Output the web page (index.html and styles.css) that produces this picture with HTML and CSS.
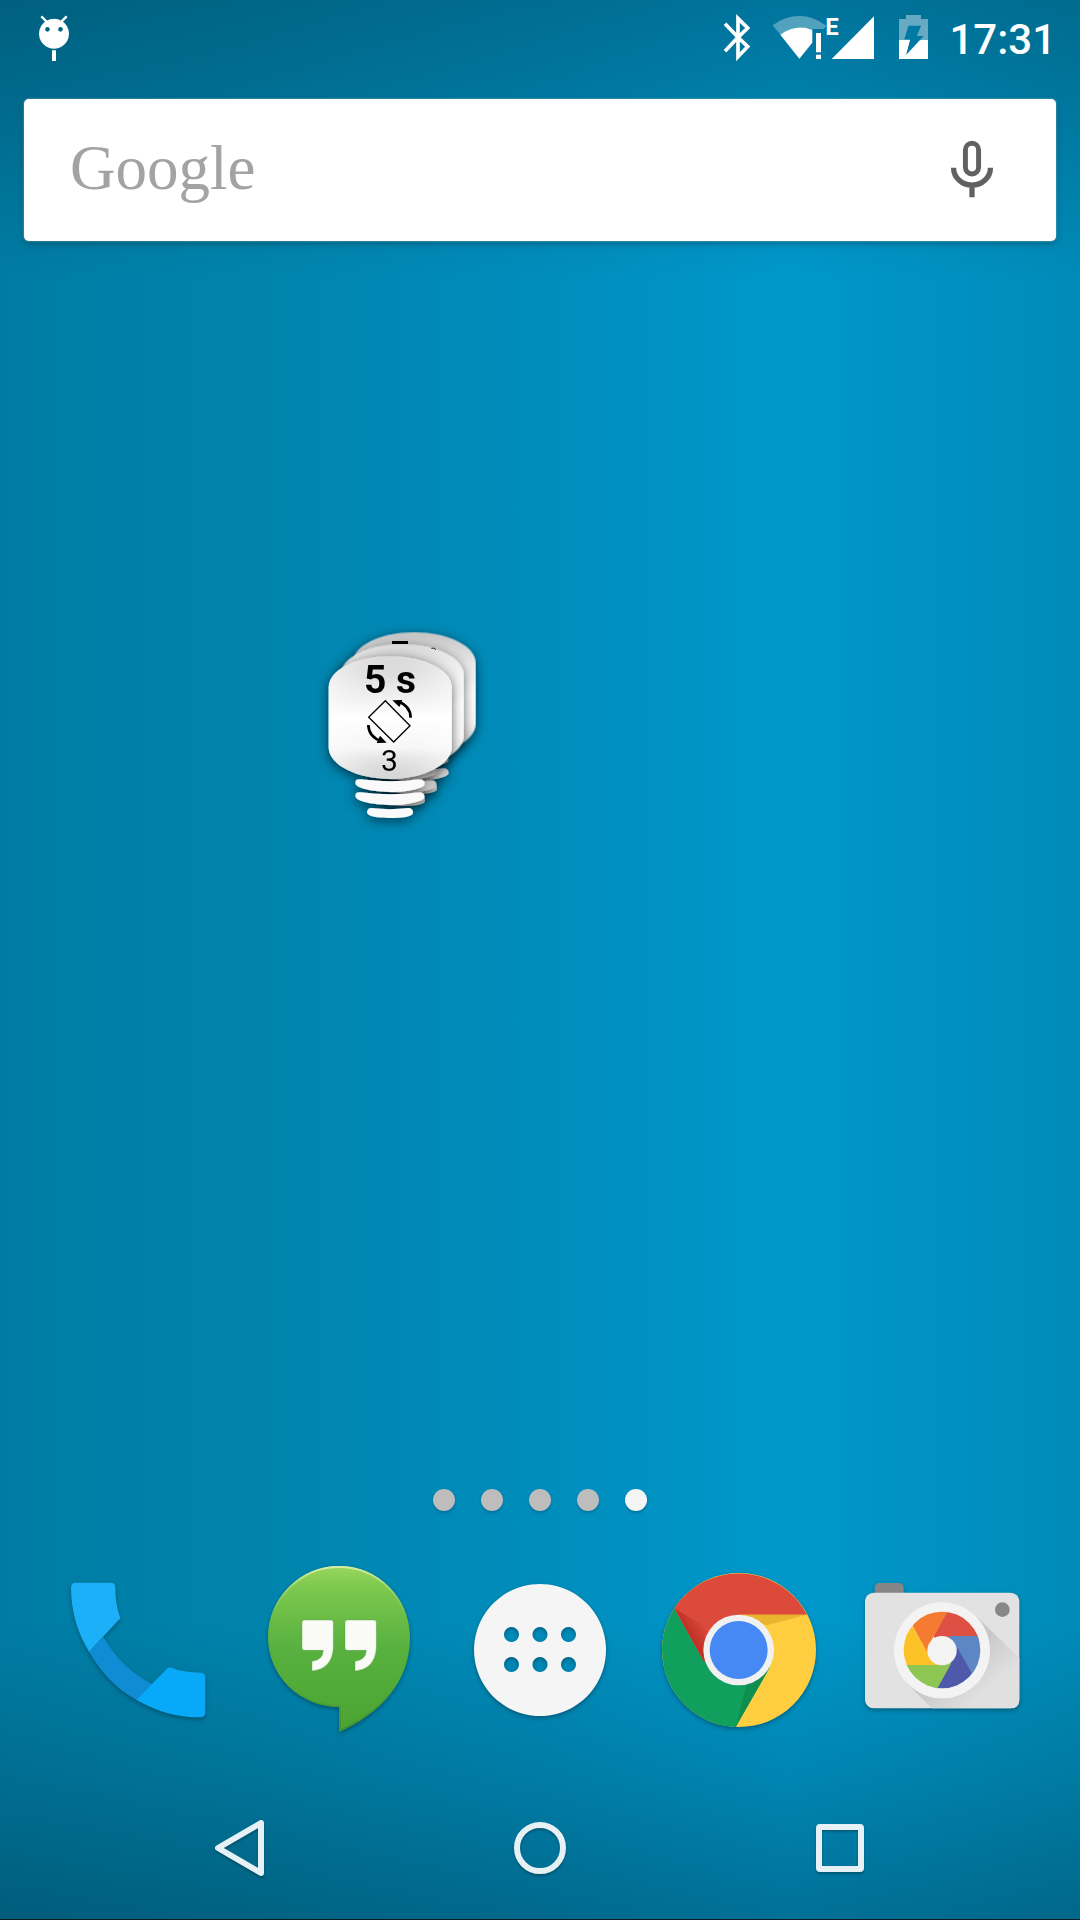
FILE: index.html
```html
<!DOCTYPE html>
<html lang="en">
<head>
<meta charset="utf-8">
<meta name="viewport" content="width=device-width, initial-scale=1">
<title>Home screen</title>
<link rel="stylesheet" href="styles.css">
</head>
<body class="screen">
<header class="status">
  <svg class="status-icon droid" viewBox="114 42 96 144" role="img" aria-label="Debugging">
    <path d="M124 49l15 15M200 49l-15 15" stroke="#fff" stroke-width="7"/>
    <path fill="#fff" fill-rule="evenodd" d="M162 56a45 45 0 1 0 .1 0zM142.500 81a7 7 0 1 1-.1 0zM181.500 81a7 7 0 1 1-.1 0zM156 151h12v32h-12z"/>
  </svg>
  <div class="status-right">
    <svg class="status-icon bluetooth" viewBox="69 42 84 144" role="img" aria-label="Bluetooth">
      <path d="M75 71l39 41-39 42M114 112l29-28-29-29v115l29-30z" fill="none" stroke="#fff" stroke-width="11"/>
    </svg>
    <svg class="status-icon network" viewBox="216 42 312 144" role="img" aria-label="Wi-Fi and mobile signal">
      <path d="M218 76Q256 48 298 48T379 77L371 87H337L337 90Q298 72 241 104z" fill="#fff" opacity=".32"/>
      <path d="M241 104Q290 70 337 90V128L298 176z" fill="#fff"/>
      <path d="M348 99h15v58h-15zM348 164h15v13h-15zM395 177L522 49v128z" fill="#fff"/>
      <text class="edge" x="376" y="105">E</text>
    </svg>
    <svg class="status-icon battery" viewBox="594 42 93 144" role="img" aria-label="Charging">
      <path d="M618 45h45v12h21v63h-42l7 0 22-12h-21l12-30h-37l-12 40h20l-2 2h-34V57h21z" fill="#fff" opacity=".4"/>
      <path d="M597 120h34l-12 43 33-43h32v57h-87z" fill="#fff"/>
      <path d="M626 77h37l-13 31h21l-52 56 12-46h-15z" fill="#0079a3"/>
    </svg>
    <time class="clock" datetime="17:31">17:31</time>
  </div>
</header>

<div class="search">
  <button class="search-open" type="button">Google</button>
  <button class="mic" type="button" aria-label="Voice search">
    <svg viewBox="750 420 132 176" aria-hidden="true">
      <rect x="796" y="430" width="40" height="93" rx="20" fill="none" stroke="#616161" stroke-width="15"/>
      <path d="M760 504a56 53 0 0 0 112 0M816 557v37" fill="none" stroke="#616161" stroke-width="16"/>
    </svg>
  </button>
</div>

<main class="workspace">
  <svg class="stack" viewBox="33 -48 600 690" role="img" aria-label="Screen rotation, 5 s, 3">
    <defs>
      <linearGradient id="sheen" x1="0" y1="0" x2="0" y2="1">
        <stop offset="0" stop-color="#c4c4c4"/><stop offset=".25" stop-color="#e9e9e9"/>
        <stop offset=".5" stop-color="#fff"/><stop offset=".75" stop-color="#f6f6f6"/>
        <stop offset="1" stop-color="#bcbcbc"/>
      </linearGradient>
      <radialGradient id="side" cx=".5" cy=".5" r=".75">
        <stop offset=".4" stop-color="#fff" stop-opacity="0"/><stop offset=".8" stop-color="#fff" stop-opacity=".6"/>
      </radialGradient>
      <linearGradient id="shade" x1="0" y1="0" x2="1" y2="0">
        <stop offset=".4" stop-color="#fff"/><stop offset="1" stop-color="#c4c4c4"/>
      </linearGradient>
      <filter id="soft" x="-30%" y="-30%" width="160%" height="160%">
        <feDropShadow dx="0" dy="9" stdDeviation="18" flood-color="#000" flood-opacity=".6"/>
      </filter>
      <path id="card" d="M86 232C86 178 172 139 270 139S455 178 455 232V412C455 466 368 507 270 507S86 466 86 412z"/>
      <g id="legs">
        <path d="M166 517Q167 505 183 508Q270 520 358 508Q374 508 374 522C374 535 320 547 270 546S163 536 166 517z"/>
        <path d="M166 556Q167 544 183 547Q270 559 358 547Q374 547 374 561C374 574 320 586 270 585S163 575 166 556z"/>
        <path d="M215 594Q270 601 325 594Q339 594 339 608C339 620 305 624 270 624S201 620 201 607Q202 594 215 594z"/>
      </g>
    </defs>
    <g filter="url(#soft)">
      <use href="#legs" x="72" y="-72" fill="#d8d8d8"/>
      <use href="#card" x="72" y="-72" fill="url(#sheen)"/>
    </g>
    <path d="M276 93h48v9h-48z"/>
    <g filter="url(#soft)">
      <use href="#legs" x="36" y="-36" fill="url(#shade)"/>
      <use href="#card" x="36" y="-36" fill="url(#sheen)"/>
      <use href="#card" x="36" y="-36" fill="url(#side)"/>
    </g>
    <path d="M394 115q8-3 14 4" fill="none" stroke="#222" stroke-width="3"/>
    <g filter="url(#soft)">
      <use href="#legs" fill="#fafafa"/>
      <use href="#card" fill="url(#sheen)"/>
      <use href="#card" fill="url(#side)"/>
    </g>
    <text class="delay" x="270" y="249">5 s</text>
    <path d="M256 272L330 347 281 396 206 322z" fill="none" stroke="#000" stroke-width="4"/>
    <path d="M292 274Q331 287 332 323M245 394Q206 381 205 345" fill="none" stroke="#000" stroke-width="8"/>
    <path d="M277 271l30-1-9 21zM260 398l-30 1 10-22z"/>
    <text class="count" x="268" y="482">3</text>
  </svg>
</main>

<nav class="pages" aria-label="Pages">
  <span class="dot"></span><span class="dot"></span><span class="dot"></span><span class="dot"></span><span class="dot current"></span>
</nav>

<section class="dock" aria-label="Favorites">
  <a class="app" href="#phone" aria-label="Phone">
    <svg viewBox="24 60 540 540" aria-hidden="true">
      <path d="M147 335L190 290Q245 385 336 432L289 479Q205 435 147 335z" fill="#108cd5"/>
      <path d="M106 128H214Q225 129 226 141Q225 190 241 235L147 335Q93 247 93 142Q94 128 106 128z" fill="#1bb0f7"/>
      <path d="M289 479L380 387Q387 380 397 384Q427 397 483 398Q495 399 496 411V518Q495 531 482 532Q380 533 289 479z" fill="#07a9f8"/>
    </svg>
  </a>
  <a class="app" href="#hangouts" aria-label="Hangouts">
    <svg viewBox="627 60 540 540" aria-hidden="true">
      <defs>
        <linearGradient id="leaf" x1="0" y1="0" x2="0" y2="1"><stop offset="0" stop-color="#9ad75d"/><stop offset=".12" stop-color="#7ec94e"/><stop offset=".5" stop-color="#58b03f"/><stop offset="1" stop-color="#4ba332"/></linearGradient>
        <linearGradient id="rim" x1="0" y1="0" x2="0" y2="1"><stop offset="0" stop-color="#d5eea4"/><stop offset=".35" stop-color="#7bc457" stop-opacity="0"/><stop offset=".7" stop-color="#36862a" stop-opacity="0"/><stop offset="1" stop-color="#36862a" stop-opacity=".5"/></linearGradient>
      </defs>
      <path d="M897 78C1015 78 1110 174 1110 292C1110 428 1018 523 897 576V501C780 501 684 408 684 291S780 78 897 78z" fill="url(#leaf)"/>
      <path d="M897 81C1013 81 1107 176 1107 292C1107 426 1016 519 900 571V498C782 498 687 406 687 291S782 81 897 81z" fill="none" stroke="url(#rim)" stroke-width="6"/>
      <path id="quote" d="M793 240h80q7 0 7 7v80Q874 388 816 393v-29Q849 360 850 331H793q-7 0-7-7v-77q0-7 7-7z" fill="#fafbf7" stroke="#469b31" stroke-opacity=".35" stroke-width="3"/>
      <use href="#quote" x="129"/>
    </svg>
  </a>
  <a class="app" href="#apps" aria-label="Apps">
    <svg viewBox="30 300 540 540" aria-hidden="true">
      <path fill="#f5f5f5" fill-rule="evenodd" d="M300 372a198 198 0 1 0 .1 0zM214.500 501a22.500 22.500 0 1 1-.1 0zM300 501a22.500 22.500 0 1 1-.1 0zM385.500 501a22.500 22.500 0 1 1-.1 0zM214.500 591a22.500 22.500 0 1 1-.1 0zM300 591a22.500 22.500 0 1 1-.1 0zM385.500 591a22.500 22.500 0 1 1-.1 0z"/>
    </svg>
  </a>
  <a class="app" href="#chrome" aria-label="Chrome">
    <svg viewBox="33 30 540 540" aria-hidden="true">
      <defs>
        <linearGradient id="redfold" x1="150" y1="275" x2="205" y2="240" gradientUnits="userSpaceOnUse"><stop offset="0" stop-color="#bb2b22"/><stop offset="1" stop-color="#db4a3b"/></linearGradient>
      </defs>
      <circle cx="297" cy="300" r="231" fill="#ffcd40"/>
      <path d="M103 175A231 231 0 0 0 287 531L389 353 297 300 190 330z" fill="#109f5c"/>
      <path d="M103 175A231 231 0 0 1 501 194H297L192 336z" fill="#db4a3b"/>
      <path d="M103 175L192 334 214 240z" fill="url(#redfold)"/>
      <path d="M297 194H501L380 226z" fill="#eab42f"/>
      <path d="M380 368L287 531 320 400z" fill="#0e8f50"/>
      <circle cx="296" cy="300" r="106" fill="#f1f1f1"/>
      <circle cx="296" cy="300" r="87" fill="#4688f4"/>
    </svg>
  </a>
  <a class="app" href="#camera" aria-label="Camera">
    <svg viewBox="36 30 540 540" aria-hidden="true">
      <defs>
        <linearGradient id="cast" x1="300" y1="300" x2="420" y2="440" gradientUnits="userSpaceOnUse"><stop offset=".3" stop-color="#c7c7c7"/><stop offset="1" stop-color="#e0e0e0"/></linearGradient>
        <clipPath id="lens"><circle cx="306" cy="300" r="115"/></clipPath>
      </defs>
      <path d="M104 130V113q1-14 15-14h57q14 0 15 14v17z" fill="#858585"/>
      <rect x="75" y="128" width="463" height="347" rx="26" fill="#e2e2e2"/>
      <path d="M410 200L538 324V449q0 26-26 26H276L200 400z" fill="url(#cast)"/>
      <circle cx="487" cy="179" r="22" fill="#888"/>
      <circle cx="306" cy="301" r="144" fill="#f3f3f3"/>
      <g clip-path="url(#lens)">
        <path d="M306 300L281 258 334 160H450V258z" fill="#df5044"/>
        <path d="M306 300L330 258H450V460L349 295z" fill="#5d86c5"/>
        <path d="M306 300L353 295 430 430H282z" fill="#4e59aa"/>
        <path d="M306 300L334 340 281 435 160 430V345H306z" fill="#8ec653"/>
        <path d="M306 300V345H160V210L203 205 263 305z" fill="#fdc228"/>
        <path d="M306 300L263 308 205 205 260 160H337L275 270z" fill="#f47b31"/>
      </g>
      <circle cx="306" cy="302" r="44" fill="#f3f3f3"/>
    </svg>
  </a>
</section>

<footer class="navbar">
  <button class="key" type="button" aria-label="Back">
    <svg viewBox="0 0 60 60" aria-hidden="true"><path d="M51 5V55L8 30z" fill="none" stroke="#e6f1f5" stroke-width="6" stroke-linejoin="round"/></svg>
  </button>
  <button class="key" type="button" aria-label="Home">
    <svg viewBox="0 0 60 60" aria-hidden="true"><circle cx="30" cy="30" r="23" fill="none" stroke="#e6f1f5" stroke-width="6"/></svg>
  </button>
  <button class="key" type="button" aria-label="Recent apps">
    <svg viewBox="0 0 60 60" aria-hidden="true"><rect x="9" y="9" width="42" height="42" rx="1" fill="none" stroke="#e6f1f5" stroke-width="6" stroke-linejoin="round"/></svg>
  </button>
</footer>
</body>
</html>
```

FILE: styles.css
```css
* {
  box-sizing: border-box;
}

.screen {
  margin: 0;
  min-height: 100vh;
  display: flex;
  flex-direction: column;
  font-family: Roboto, sans-serif;
  background:
    linear-gradient(to bottom, rgba(0, 20, 30, .27) 0, rgba(0, 20, 30, .2) 80px, rgba(0, 20, 30, 0) 280px),
    linear-gradient(to top, rgba(0, 20, 30, .3) 0, rgba(0, 20, 30, .14) 144px, rgba(0, 20, 30, 0) 300px),
    linear-gradient(to right, #007ca4 0%, #0083ac 22%, #008dbc 50%, #0098cb 73%, #0091c1 88%, #008bb8 100%);
}

button {
  border: 0;
  padding: 0;
  background: none;
  cursor: pointer;
}

svg {
  display: block;
}

.status {
  display: flex;
  justify-content: space-between;
  align-items: center;
  height: 76px;
  padding: 0 24px 0 38px;
}

.status-right {
  display: flex;
  align-items: center;
}

.status-icon {
  height: 48px;
  overflow: visible;
}

.droid {
  width: 32px;
}

.bluetooth {
  width: 28px;
  margin-right: 21px;
}

.network {
  width: 104px;
  margin-right: 22px;
}

.battery {
  width: 31px;
  margin-right: 20px;
}

.edge {
  font: 700 72px Roboto, sans-serif;
  fill: #fff;
}

.clock {
  padding-top: 4px;
  color: #fff;
  font-size: 42px;
  font-weight: 500;
  line-height: 48px;
}

.search {
  display: flex;
  align-items: stretch;
  height: 142px;
  margin: 23px 24px 0;
  border-radius: 5px;
  background: #fff;
  box-shadow: 0 0 2px rgba(255, 255, 255, .6), 0 3px 6px rgba(0, 0, 0, .25);
}

.search-open {
  flex: 1;
  padding: 0 0 4px 46px;
  color: #a3a3a3;
  font: 63px "Liberation Serif", serif;
  text-align: left;
}

.mic {
  padding: 0 62px 2px 24px;
}

.mic svg {
  width: 44px;
  height: 58px;
}

.workspace {
  flex: 1;
  display: grid;
  grid-template-columns: repeat(4, 1fr);
  grid-template-rows: repeat(4, 1fr);
  padding: 0 24px;
}

.stack {
  grid-area: 2 / 2;
  place-self: center;
  width: 200px;
  height: 230px;
  overflow: visible;
}

.delay {
  font: 700 117px Roboto, sans-serif;
  text-anchor: middle;
}

.count {
  font: 400 90px Roboto, sans-serif;
  text-anchor: middle;
}

.pages {
  display: flex;
  justify-content: center;
  gap: 26px;
  margin-bottom: 49px;
}

.dot {
  width: 22px;
  height: 22px;
  border-radius: 50%;
  background: #bdbdbd;
  box-shadow: 0 2px 3px rgba(0, 0, 0, .2);
}

.current {
  background: #f5f5f5;
}

.dock {
  display: grid;
  grid-template-columns: repeat(5, 1fr);
  justify-items: center;
  padding: 0 38px 36px;
}

.app svg {
  width: 180px;
  height: 180px;
  filter: drop-shadow(0 2px 2px rgba(0, 0, 0, .3));
}

.navbar {
  display: flex;
  justify-content: center;
  align-items: center;
  gap: 240px;
  height: 144px;
  border-bottom: 1px solid #0d1d24;
}

.key svg {
  width: 60px;
  height: 60px;
  filter: drop-shadow(0 2px 1px rgba(0, 0, 0, .25));
}
```
